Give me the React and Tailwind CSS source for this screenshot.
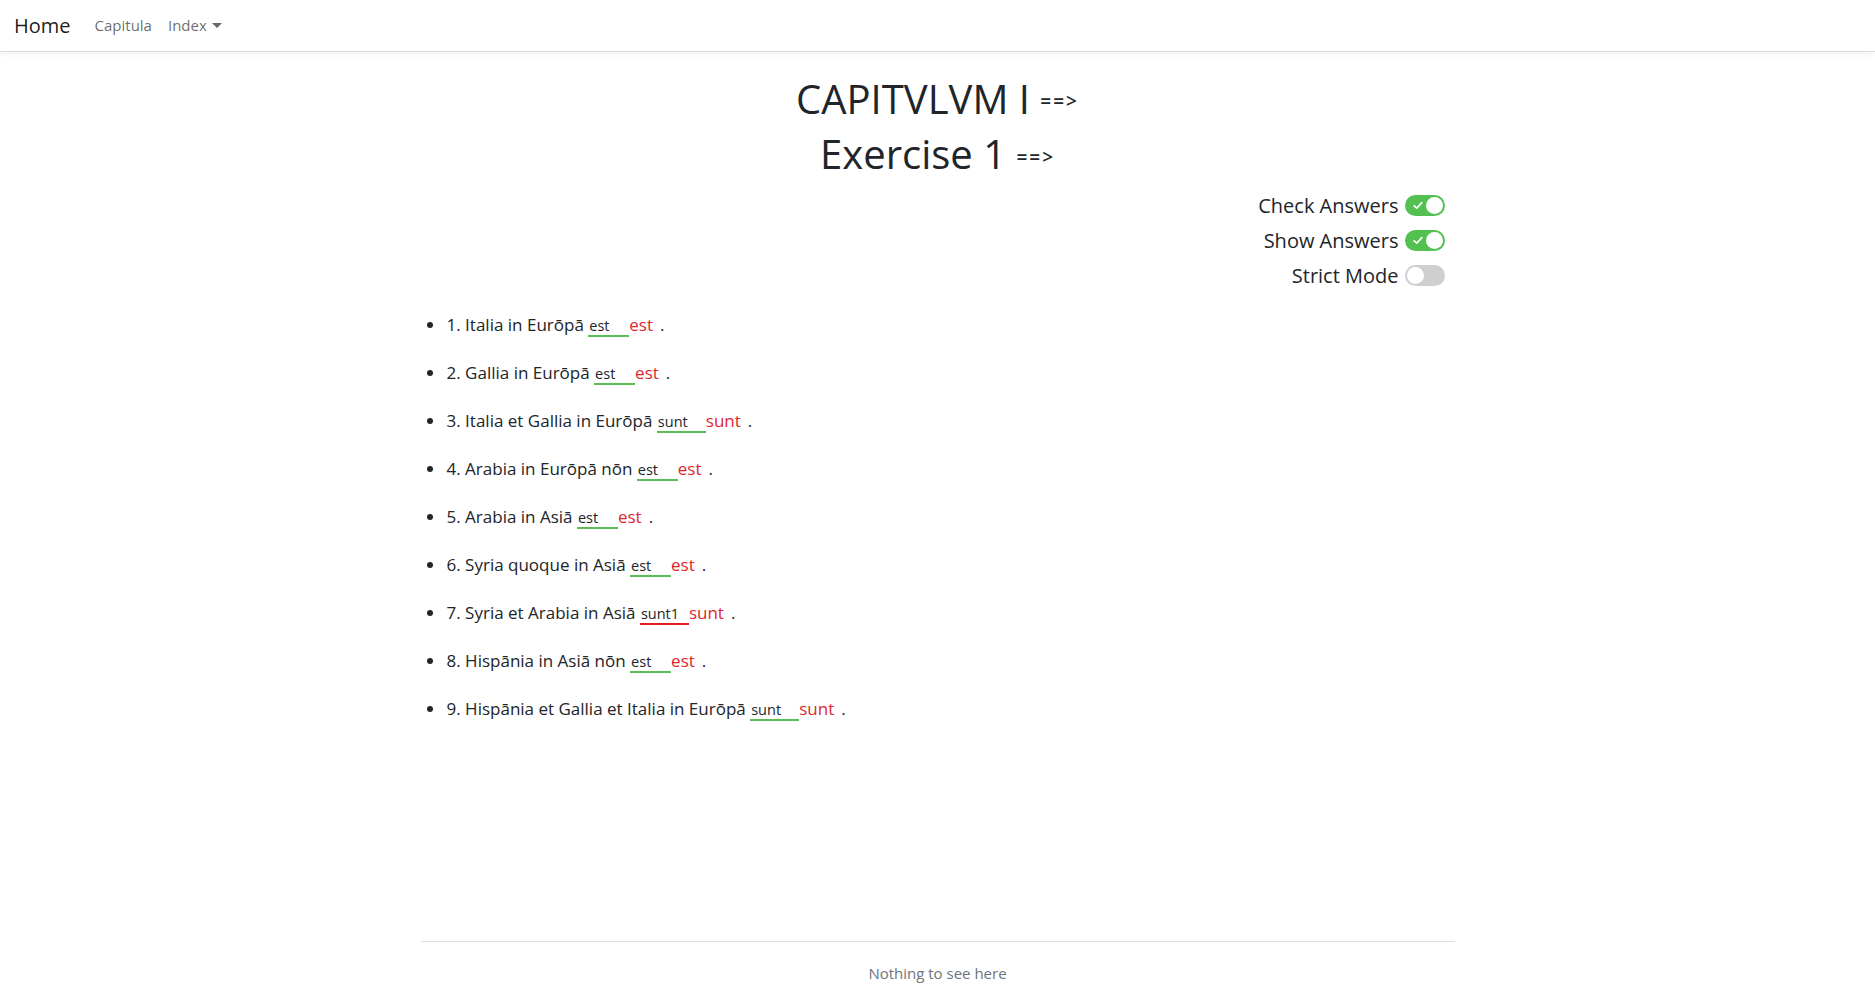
import React, { useState } from "react";

const sentences = [
  { text: "1. Italia in Eurōpā", given: "est", answer: "est" },
  { text: "2. Gallia in Eurōpā", given: "est", answer: "est" },
  { text: "3. Italia et Gallia in Eurōpā", given: "sunt", answer: "sunt" },
  { text: "4. Arabia in Eurōpā nōn", given: "est", answer: "est" },
  { text: "5. Arabia in Asiā", given: "est", answer: "est" },
  { text: "6. Syria quoque in Asiā", given: "est", answer: "est" },
  { text: "7. Syria et Arabia in Asiā", given: "sunt1", answer: "sunt" },
  { text: "8. Hispānia in Asiā nōn", given: "est", answer: "est" },
  { text: "9. Hispānia et Gallia et Italia in Eurōpā", given: "sunt", answer: "sunt" },
];

// little switch like the one from react-toggle
const Toggle = ({ on, onClick }) => (
  <button
    onClick={onClick}
    className={
      "relative flex items-center w-[40px] h-[21px] rounded-full " +
      (on ? "bg-[#52c152]" : "bg-[#cfcfcf]")
    }
  >
    {on && (
      <svg className="ml-[8px]" width="10" height="9" viewBox="0 0 10 9">
        <path d="M1.2 4.8 L3.8 7.2 L8.8 1.6" fill="none" stroke="white" strokeWidth="1.7" strokeLinecap="round" strokeLinejoin="round" />
      </svg>
    )}
    <span
      className={
        "absolute top-[2px] w-[17px] h-[17px] rounded-full bg-white " +
        (on ? "right-[2px]" : "left-[2px]")
      }
    />
  </button>
);

const App = () => {
  const [check, setCheck] = useState(true);
  const [show, setShow] = useState(true);
  const [strict, setStrict] = useState(false);

  return (
    <div className="min-h-screen flex flex-col bg-white text-[#212529] font-['Open_Sans',sans-serif]">
      <nav className="h-[52px] flex items-center px-[14px] bg-white border-b border-[#dcdcdc] shadow-[0_2px_6px_rgba(0,0,0,0.06)]">
        <span className="text-[20px] text-black/90 mr-[16px]">Home</span>
        <span className="text-[15px] text-black/60 px-[8px]">Capitula</span>
        <span className="text-[15px] text-black/60 px-[8px] flex items-center">
          Index
          <span className="ml-[5px] w-0 h-0 border-l-[5px] border-r-[5px] border-t-[5px] border-l-transparent border-r-transparent border-t-black/60" />
        </span>
      </nav>

      <main className="w-[1034px] mx-auto">
        <h1 className="mt-[23px] text-center text-[40px] leading-[48px]">
          CAPITVLVM I <span className="inline-block align-middle -translate-y-[2px] text-[19px] font-semibold tracking-[2px]">==&gt;</span>
        </h1>
        <h1 className="mt-[3px] text-center text-[40px] leading-[48px]">
          Exercise 1 <span className="inline-block align-middle -translate-y-[2px] text-[19px] font-semibold tracking-[2px]">==&gt;</span>
        </h1>

        <div className="mt-[8px] flex flex-col items-end gap-[5px] pr-[10px]">
          <div className="h-[30px] flex items-center gap-[6px]">
            <span className="text-[20px]">Check Answers</span>
            <Toggle on={check} onClick={() => setCheck(!check)} />
          </div>
          <div className="h-[30px] flex items-center gap-[6px]">
            <span className="text-[20px]">Show Answers</span>
            <Toggle on={show} onClick={() => setShow(!show)} />
          </div>
          <div className="h-[30px] flex items-center gap-[6px]">
            <span className="text-[20px]">Strict Mode</span>
            <Toggle on={strict} onClick={() => setStrict(!strict)} />
          </div>
        </div>

        <ul className="mt-[22px] list-disc pl-[25px] text-[17px] leading-6">
          {sentences.map((s, i) => (
            <li key={i} className="h-6 mb-6 pl-[1px]">
              {s.text}{" "}
              <span
                className={
                  "inline-block text-[14.5px] leading-[18px] pl-[1px] border-b-2 " +
                  (s.answer.length > 3 ? "w-[49px] " : "w-[41px] ") +
                  (s.given === s.answer ? "border-[#5cbf55]" : "border-[#e01b22]")
                }
              >
                {s.given}
              </span>
              {show && <span className="text-[#e0262e]">{s.answer}</span>}
              <span className="ml-[7px]">.</span>
            </li>
          ))}
        </ul>
      </main>

      <footer className="mt-auto w-[1034px] mx-auto h-[62px] border-t border-[#dedede] pt-[20px] text-center text-[15px] text-[#6c757d]">
        Nothing to see here
      </footer>
    </div>
  );
};

export default App;
